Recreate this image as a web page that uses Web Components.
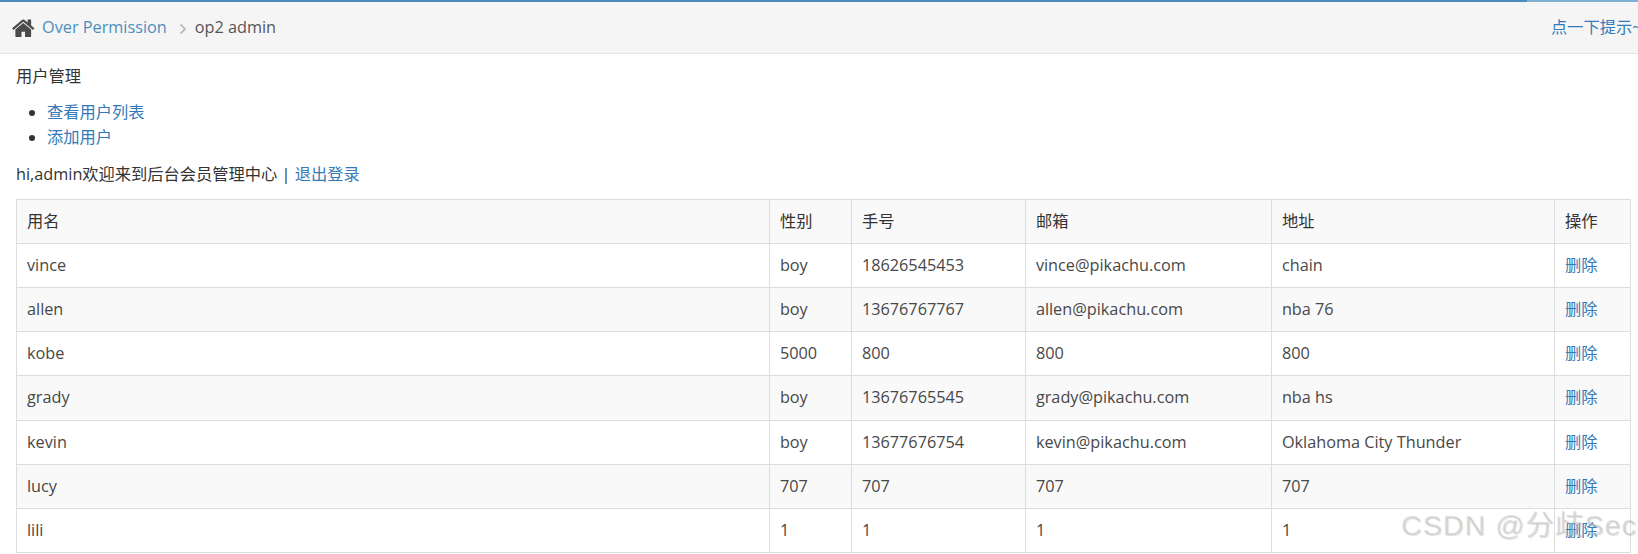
<!DOCTYPE html>
<html>

<head>
    <meta charset="utf8" />
    <style>
        html, body {
            margin: 0;
            padding: 0;
            height: 554px;
            overflow: hidden;
            background: #fff;
            font-family: "Open Sans", "Noto Sans CJK SC", sans-serif;
            font-size: 16.25px;
            line-height: 23.2px;
            color: #333;
        }

        body {
            position: relative;
        }
    </style>
</head>

<body>
    <pk-breadcrumb section="Over Permission" page="op2 admin" tip="点一下提示~"></pk-breadcrumb>
    <pk-user-panel>
        <pk-user-table></pk-user-table>
    </pk-user-panel>
    <pk-watermark>CSDN @分歧Sec</pk-watermark>

    <script>
        class PkBreadcrumb extends HTMLElement {
            constructor() {
                super()
                const shadow = this.attachShadow({ mode: 'open' })
                shadow.innerHTML = `
    <style>
        :host { display: block; position: relative; }
        .line { display: flex; height: 2px; background: #4a8dbd; }
        .line i { margin-left: auto; width: 111px; background: #7fb0d3; }
        .bar {
            display: flex;
            align-items: center;
            height: 51px;
            padding-left: 10.500px;
            background: #f5f5f5;
            border-bottom: 1px solid #e5e5e5;
            white-space: nowrap;
        }
        .home { width: 24.500px; height: 24.500px; margin: 2px 7px 0 0; fill: #4a4a4a; }
        a { color: #4c8fbd; text-decoration: none; }
        .sep { width: 8px; height: 10px; margin: 2px 8px 0 12px; fill: none; stroke: #b2b6bf; stroke-width: 1.7; }
        .page { color: #555; }
        .tip { margin-left: auto; margin-right: -3.500px; color: #337ab7; }
    </style>
    <div class="line"><i></i></div>
    <div class="bar">
        <svg class="home" viewBox="0 0 1792 1792"><path d="M1472 992v480q0 26-19 45t-45 19h-384v-384H768v384H384q-26 0-45-19t-19-45V992q0-1 .5-3t.5-3l575-474 575 474q1 2 1 6zm223-69l-62 74q-8 9-21 11h-3q-13 0-21-7L896 424l-692 577q-12 8-24 7-13-2-21-11l-62-74q-8-10-7-23.500t11-21.500l719-599q32-26 76-26t76 26l244 204V288q0-14 9-23t23-9h192q14 0 23 9t9 23v408l219 182q10 8 11 21.500t-7 23.500z"/></svg>
        <a href="#">${this.getAttribute('section')}</a>
        <svg class="sep" viewBox="0 0 8 10"><path d="M1.500 .5 6 5 1.500 9.500"/></svg>
        <span class="page">${this.getAttribute('page')}</span>
        <a class="tip" href="#">${this.getAttribute('tip')}</a>
    </div>`
            }
        }
        customElements.define('pk-breadcrumb', PkBreadcrumb)

        class PkUserPanel extends HTMLElement {
            constructor() {
                super()
                const shadow = this.attachShadow({ mode: 'open' })
                shadow.innerHTML = `
    <style>
        :host { display: block; padding: 11px 7px 0 16px; }
        p { margin: 0; }
        ul { margin: 13px 0 13px; padding: 0 0 0 31px; }
        li { height: 24.500px; }
        li::marker { color: #333; }
        a { color: #337ab7; text-decoration: none; }
        .welcome { margin-bottom: 12.200px; }
    </style>
    <p>用户管理</p>
    <ul>
        <li><a href="#">查看用户列表</a></li>
        <li><a href="#">添加用户</a></li>
    </ul>
    <p class="welcome">hi,admin欢迎来到后台会员管理中心 | <a href="#">退出登录</a></p>
    <slot></slot>`
            }
        }
        customElements.define('pk-user-panel', PkUserPanel)

        const users = [
            ['vince', 'boy', '18626545453', 'vince@pikachu.com', 'chain'],
            ['allen', 'boy', '13676767767', 'allen@pikachu.com', 'nba 76'],
            ['kobe', '5000', '800', '800', '800'],
            ['grady', 'boy', '13676765545', 'grady@pikachu.com', 'nba hs'],
            ['kevin', 'boy', '13677676754', 'kevin@pikachu.com', 'Oklahoma City Thunder'],
            ['lucy', '707', '707', '707', '707'],
            ['lili', '1', '1', '1', '1'],
        ]

        class PkUserTable extends HTMLElement {
            constructor() {
                super()
                const shadow = this.attachShadow({ mode: 'open' })
                const rows = users.map(u => `<tr>${u.map(v => `<td>${v}</td>`).join('')}<td><a href="#">删除</a></td></tr>`).join('')
                shadow.innerHTML = `
    <style>
        :host { display: block; }
        table { width: 100%; table-layout: fixed; border-collapse: collapse; }
        th, td {
            padding: 10px;
            border: 1px solid #ddd;
            font-weight: normal;
            text-align: left;
            white-space: nowrap;
        }
        th:not(:first-child), td:not(:first-child) { padding-left: 10.400px; }
        thead tr, tbody tr:nth-child(even) { background: #f9f9f9; }
        td { color: #484848; }
        a { color: #337ab7; text-decoration: none; }
    </style>
    <table>
        <colgroup>
            <col style="width:752.500px"><col style="width:82px"><col style="width:174px">
            <col style="width:246px"><col style="width:283px"><col>
        </colgroup>
        <thead><tr><th>用名</th><th>性别</th><th>手号</th><th>邮箱</th><th>地址</th><th>操作</th></tr></thead>
        <tbody>${rows}</tbody>
    </table>`
            }
        }
        customElements.define('pk-user-table', PkUserTable)

        class PkWatermark extends HTMLElement {
            constructor() {
                super()
                const shadow = this.attachShadow({ mode: 'open' })
                shadow.innerHTML = `
    <style>
        :host {
            position: absolute;
            left: 1401px;
            top: 509px;
            font: 28.500px/32px "Liberation Sans", "Noto Sans CJK SC", sans-serif;
            letter-spacing: 1.100px;
            color: rgba(190, 190, 190, .45);
            text-shadow: 1px 1px 1px rgba(130, 130, 130, .25);
            white-space: nowrap;
        }
    </style>
    <slot></slot>`
            }
        }
        customElements.define('pk-watermark', PkWatermark)
    </script>
</body>

</html>
